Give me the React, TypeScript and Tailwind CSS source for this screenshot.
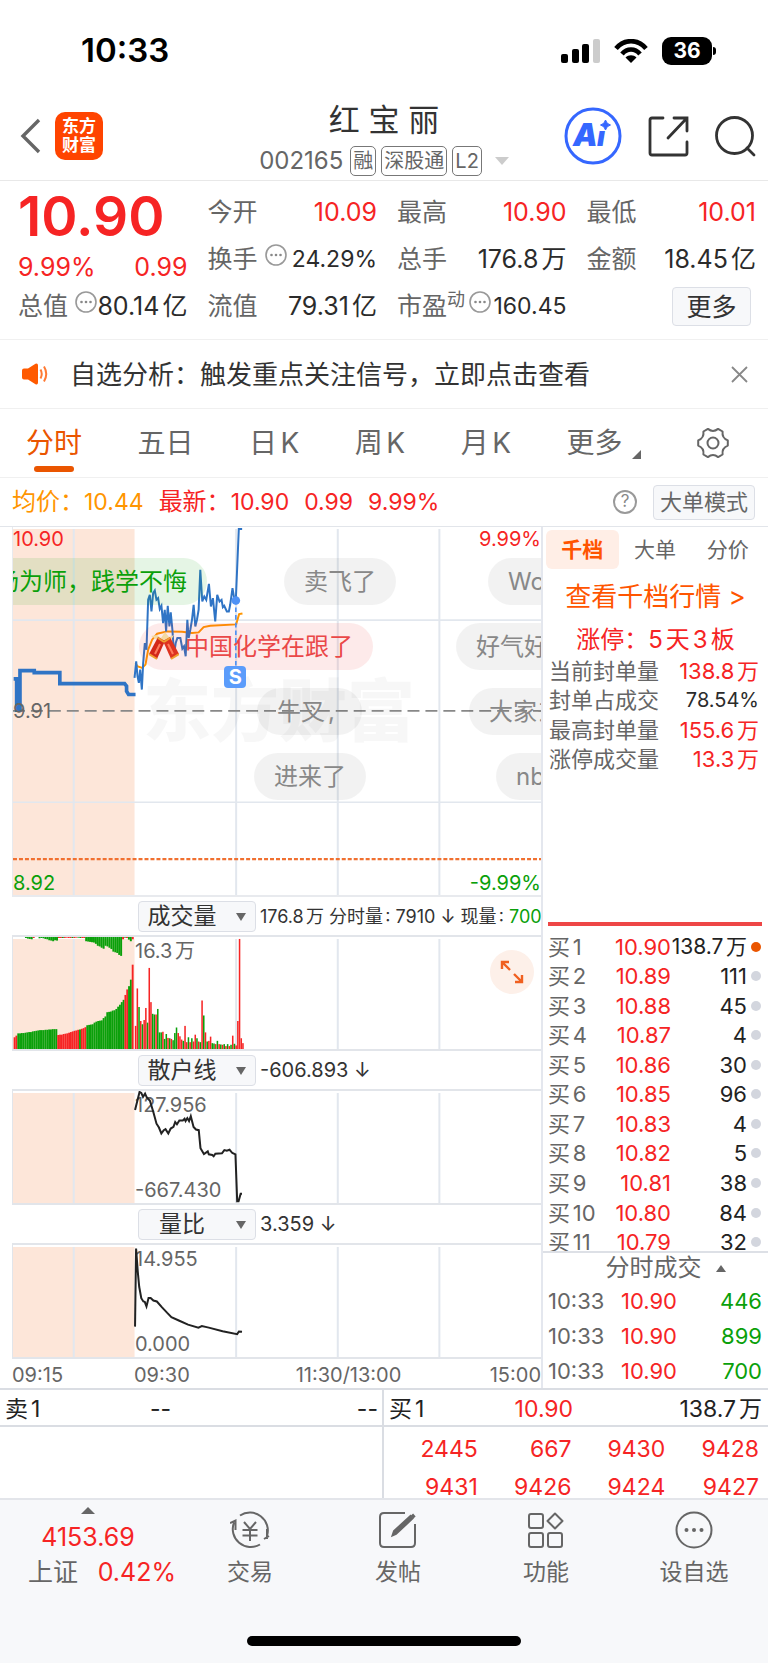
import React from "react";
import clsx from "clsx";

type Tone = "red" | "green" | "dark";

const toneClass: Record<Tone, string> = {
  red: "text-[#f62424]",
  green: "text-[#0aa00a]",
  dark: "text-[#2b2b2b]",
};

const sealStats: { label: string; value: string; tone: Tone }[] = [
  { label: "当前封单量", value: "138.8万", tone: "red" },
  { label: "封单占成交", value: "78.54%", tone: "dark" },
  { label: "最高封单量", value: "155.6万", tone: "red" },
  { label: "涨停成交量", value: "13.3万", tone: "red" },
];

const buyOrders = [
  { level: "买1", price: "10.90", amount: "138.7万", hot: true },
  { level: "买2", price: "10.89", amount: "111" },
  { level: "买3", price: "10.88", amount: "45" },
  { level: "买4", price: "10.87", amount: "4" },
  { level: "买5", price: "10.86", amount: "30" },
  { level: "买6", price: "10.85", amount: "96" },
  { level: "买7", price: "10.83", amount: "4" },
  { level: "买8", price: "10.82", amount: "5" },
  { level: "买9", price: "10.81", amount: "38" },
  { level: "买10", price: "10.80", amount: "84" },
  { level: "买11", price: "10.79", amount: "32" },
];

const trades = [
  { time: "10:33", price: "10.90", amount: "446" },
  { time: "10:33", price: "10.90", amount: "899" },
  { time: "10:33", price: "10.90", amount: "700" },
];

const queue = ["2445", "667", "9430", "9428", "9431", "9426", "9424", "9427"];

const priceLine =
  "402,475 407,425 411,470 415,490 419,450 424,510 428,430 433,370 438,390 443,240 448,225 453,275 458,220 463,212 468,240 473,235 478,268 483,258 488,310 493,270 497,335 502,258 507,320 511,278 516,330 521,405 526,370 531,355 540,355 546,387 551,380 556,410 561,300 565,355 570,330 575,300 580,255 585,320 590,300 595,270 600,150 606,245 612,230 618,240 626,192 632,260 638,235 645,305 651,225 658,245 664,240 668,262 672,258 680,275 686,275 690,255 697,205 702,235 707,240 716,27 726,27";
const auctionLine =
  "38,478 47,478 47,572 57,572 57,453 100,453 100,459 177,459 177,492 372,492 378,500 378,515 384,525 405,525";
const averageLine =
  "405,430 410,440 425,445 435,435 443,390 455,360 470,342 500,335 545,336 575,340 595,338 610,322 630,318 708,314 717,283 727,281";
const retailLine =
  "387,88 400,33 405,36 410,48 416,38 421,50 430,60 440,95 449,130 456,142 463,160 470,150 475,147 483,160 490,145 498,140 503,125 508,132 515,120 525,120 530,115 533,122 538,113 543,122 548,107 556,140 563,148 571,150 576,205 586,223 597,215 600,224 610,226 614,230 619,222 638,221 645,211 652,213 660,210 668,220 677,224 682,368 686,368 692,345 696,345";
const ratioLine =
  "387,742 390,503 395,575 399,620 405,655 411,665 415,666 420,680 426,654 432,654 440,662 450,665 465,683 480,700 492,713 515,724 540,736 570,745 580,740 600,745 640,756 682,765 687,757 696,758";

// one bar per minute: top edge and direction
const minuteBars =
  "320r 205r 262g 305r 315g 302r 265r 310g 142r 247r 283g 285g 285r 268g 340g 340g 338r 360g 345g 357r 358g 360r 364g 342g 325g 342r 352r 362r 366g 320r 370r 355g 370r 358g 368r 347r 358g 368r 370g 242r 288g 340r 368g 366r 353r 373g 374g 376r 366g 376r 377g 378r 376g 382r 376g 382r 378g 350r 375g 380r 305r 53r 358r 373r"
    .split(" ")
    .map((b) => ({ top: parseInt(b), up: b.endsWith("r") }));

// call auction bars, 5.5 units wide
const auctionBars =
  "355r 350r 343g 343g 342g 342g 341g 340g 339g 339g 337g 336g 335g 334g 333g 333g 333g 332g 332g 331g 331g 330g 330g 330g 348r 347r 347r 345r 344r 343r 341r 339r 337r 335r 334r 332r 331g 329r 327r 324r 318g 317g 316g 315g 310g 307g 305g 304g 303g 296g 291g 278g 277g 276g 273g 272g 268g 261g 255g 247g 240g 225r 208r 198g 178g 132r"
    .split(" ")
    .map((b) => ({ top: parseInt(b), up: b.endsWith("r") }));

const unmatchedBars =
  "50g 52g 53g 54g 50r 0g 0g 51g 50g 51g 53g 54g 57g 58g 60g 57g 58g 50r 50r 50g 50r 49r 50r 50r 50g 50r 49r 49g 50g 50r 50r 60g 61g 62g 63g 64g 68g 74g 76g 80g 83g 74g 76g 80g 84g 92g 94g 96g 102g 105g 54r 49g 50r 55g 60g 54r"
    .split(" ")
    .map((b) => ({ top: parseInt(b), up: b.endsWith("r") }));

function StatusBar() {
  return (
    <div className="flex h-[92px] items-center justify-between pt-[10px] pr-[52px] pl-[81px]">
      <span className="text-[33px] font-semibold text-black">10:33</span>
      <div className="flex items-center gap-[14px]">
        <svg width="39" height="24" viewBox="0 0 39 24">
          <rect x="0" y="15" width="7" height="9" rx="2" />
          <rect x="11" y="10" width="7" height="14" rx="2" />
          <rect x="21" y="5" width="7" height="19" rx="2" />
          <rect x="32" y="0" width="7" height="24" rx="2" fill="#cccccc" />
        </svg>
        <svg width="34" height="24" viewBox="0 0 34 24" fill="none" stroke="#000" strokeWidth="4.6">
          <path d="M2 9.5C10-.3 24-.3 32 9.5" />
          <path d="M8 15C13 9 21 9 26 15" />
          <path d="M17 24 11.5 18.5C14.5 15.6 19.5 15.6 22.5 18.5Z" fill="#000" stroke="none" />
        </svg>
        <div className="flex items-center gap-px">
          <div className="flex h-7 w-[50px] items-center justify-center rounded-[9px] bg-black text-[21px] font-bold text-white">
            36
          </div>
          <div className="h-2 w-[3px] rounded-r-full bg-black" />
        </div>
      </div>
    </div>
  );
}

function Header() {
  return (
    <header className="flex h-[89px] items-center border-b border-[#e8e8e8] px-[12px]">
      <div className="flex flex-1 items-center gap-[14px]">
        <button aria-label="返回" className="ml-[8px]">
          <svg width="21" height="36" viewBox="0 0 21 36" fill="none" stroke="#666" strokeWidth="3.4">
            <path d="M19 2 3 18 19 34" />
          </svg>
        </button>
        <div className="flex h-[48px] w-[48px] flex-col items-center justify-center rounded-[10px] bg-[#ff4400] text-[17px] leading-[19px] font-bold text-white">
          <span>东方</span>
          <span>财富</span>
        </div>
      </div>
      <div className="flex flex-col items-center pt-[3px]">
        <h1 className="text-[31px] leading-[46px] text-[#333]">红 宝 丽</h1>
        <div className="flex h-[36px] items-center gap-[5px] text-[20px] text-[#666]">
          <span className="mr-[2px] text-[24px]">002165</span>
          <span className="rounded-[5px] border border-[#777] px-[2px] leading-[28px]">融</span>
          <span className="rounded-[5px] border border-[#777] px-[2px] leading-[28px]">深股通</span>
          <span className="rounded-[5px] border border-[#777] px-[2px] leading-[28px]">L2</span>
          <svg className="ml-[8px]" width="14" height="8" viewBox="0 0 14 8">
            <path d="M0 0h14L7 8z" fill="#ccc" />
          </svg>
        </div>
      </div>
      <div className="flex flex-1 items-center justify-end gap-[26px]">
        <button aria-label="Ai">
          <svg width="58" height="58" viewBox="0 0 58 58" fill="#3567ff">
            <circle cx="29" cy="29" r="27" fill="none" stroke="#3567ff" strokeWidth="3" />
            <text x="9" y="39" fontSize="31" fontWeight="900" fontStyle="italic">A</text>
            <text x="33" y="39" fontSize="27" fontWeight="900" fontStyle="italic">ı</text>
            <path d="M41.5 13Q42.5 17 46.5 18Q42.5 19 41.5 23Q40.5 19 36.5 18Q40.5 17 41.5 13Z" stroke="#3567ff" />
          </svg>
        </button>
        <button aria-label="分享">
          <svg width="41" height="41" viewBox="0 0 41 41" fill="none" stroke="#333" strokeWidth="2.8" strokeLinecap="round">
            <path d="M15 2H4Q2 2 2 4V37Q2 39 4 39H37Q39 39 39 37V26" />
            <path d="M26 2H39V15M38 3 20 22" />
          </svg>
        </button>
        <button aria-label="搜索">
          <svg width="41" height="41" viewBox="0 0 41 41" fill="none" stroke="#333" strokeWidth="2.8" strokeLinecap="round">
            <circle cx="19.5" cy="19.5" r="18" />
            <path d="M32 32 39 39" />
          </svg>
        </button>
      </div>
    </header>
  );
}

function Dots() {
  return (
    <svg className="mb-[10px] shrink-0" width="22" height="22" viewBox="0 0 22 22">
      <circle cx="11" cy="11" r="10" fill="none" stroke="#999" strokeWidth="1.6" />
      <circle cx="6.5" cy="11" r="1.3" fill="#888" />
      <circle cx="11" cy="11" r="1.3" fill="#888" />
      <circle cx="15.5" cy="11" r="1.3" fill="#888" />
    </svg>
  );
}

interface QuoteProps {
  label: string;
  value: string;
  tone?: Tone;
  mark?: string;
  dots?: boolean;
  small?: boolean;
}

function Quote({ label, value, tone = "dark", mark, dots, small }: QuoteProps) {
  return (
    <div className="flex h-[47px] items-center justify-between whitespace-nowrap">
      <span className="flex items-center text-[25px] text-[#666]">
        {label}
        {mark && <span className="mb-[14px] text-[18px]">{mark}</span>}
        {dots && (
          <span className={clsx("flex", mark ? "ml-[4px]" : "ml-[7px]")}>
            <Dots />
          </span>
        )}
      </span>
      <span className={clsx(small ? "text-[23px]" : "text-[25px]", dots && "-ml-2", toneClass[tone])}>{value}</span>
    </div>
  );
}

function QuotePanel() {
  return (
    <section className="grid grid-cols-4 gap-x-5 border-b border-[#f0f0f0] pt-2 pr-[12px] pb-[9px] pl-[18px]">
      <div>
        <div className="flex h-[54px] items-center text-[55px] font-semibold text-[#f62424]">10.90</div>
        <div className="flex h-10 items-end justify-between text-[25px] leading-8 text-[#f62424]">
          <span>9.99%</span>
          <span>0.99</span>
        </div>
        <Quote label="总值" value="80.14亿" dots />
      </div>
      <div>
        <Quote label="今开" value="10.09" tone="red" />
        <Quote label="换手" value="24.29%" dots small />
        <Quote label="流值" value="79.31亿" />
      </div>
      <div>
        <Quote label="最高" value="10.90" tone="red" />
        <Quote label="总手" value="176.8万" />
        <Quote label="市盈" value="160.45" mark="动" dots small />
      </div>
      <div>
        <Quote label="最低" value="10.01" tone="red" />
        <Quote label="金额" value="18.45亿" />
        <div className="flex h-[47px] items-center justify-end pr-[5px]">
          <button className="h-[39px] w-[79px] rounded border border-[#dcdfe6] bg-[#f7f8fa] text-[25px] leading-[36px] text-[#333]">
            更多
          </button>
        </div>
      </div>
    </section>
  );
}

function Notice() {
  return (
    <div className="flex h-[69px] items-center border-b border-[#f0f0f0] pr-[20px] pl-[22px]">
      <svg width="26" height="22" viewBox="0 0 26 22">
        <path d="M0 7.5Q0 5.5 2 5.5H6L13.5.8Q16 0 16 2.5V19.5Q16 22 13.5 21.2L6 16.5H2Q0 16.5 0 14.5Z" fill="#ff5a00" />
        <path d="M18.5 6.5Q21 11 18.5 15.5M22 3.5Q26.5 11 22 18.5" fill="none" stroke="#ff7a33" strokeWidth="2" />
      </svg>
      <a href="#analysis" className="ml-[22px] flex-1 text-[26px] text-[#333]">
        自选分析：触发重点关注信号，立即点击查看
      </a>
      <button aria-label="关闭">
        <svg width="17" height="17" viewBox="0 0 17 17" stroke="#888" strokeWidth="1.8">
          <path d="M1 1 16 16M16 1 1 16" />
        </svg>
      </button>
    </div>
  );
}

function PeriodTabs() {
  return (
    <nav className="flex h-[69px] items-center justify-between border-b border-[#f0f0f0] pr-[39px] pl-[26px] text-[28px] text-[#666]">
      <button className="relative text-[#ea5500]">
        分时
        <span className="absolute inset-x-[8px] -bottom-[8px] h-[6px] rounded-full bg-[#ea5500]" />
      </button>
      <button>五日</button>
      <button>日K</button>
      <button>周K</button>
      <button>月K</button>
      <button className="flex items-end gap-[10px]">
        更多
        <svg className="mb-[5px]" width="9" height="9" viewBox="0 0 9 9">
          <path d="M9 0V9H0z" fill="#666" />
        </svg>
      </button>
      <button aria-label="设置">
        <svg width="32" height="32" viewBox="0 0 32 32" fill="none" stroke="#666" strokeWidth="2" strokeLinejoin="round">
          <path d="M30.8 13.4V18.6Q24.7 21 25.6 27.5L21.1 30.1Q16 26 10.9 30.1L6.4 27.5Q7.3 21 1.2 18.6V13.4Q7.3 11 6.4 4.5L10.9 1.9Q16 6 21.1 1.9L25.6 4.5Q24.7 11 30.8 13.4Z" />
          <circle cx="16" cy="16" r="5.5" />
        </svg>
      </button>
    </nav>
  );
}

function PriceSummary() {
  return (
    <div className="flex h-[48px] items-center justify-between pr-[13px] pl-[12px] text-[23px]">
      <div className="flex items-baseline gap-[15px] text-[#f62424]">
        <span className="text-[#ff9500]">
          <span className="text-[24px]">均价：</span>10.44
        </span>
        <span>
          <span className="text-[24px]">最新：</span>10.90
        </span>
        <span>0.99</span>
        <span>9.99%</span>
      </div>
      <div className="flex items-center gap-[16px]">
        <button aria-label="帮助" className="flex h-6 w-6 items-center justify-center rounded-full border-2 border-[#999] text-[17px] text-[#888]">
          ?
        </button>
        <button className="h-[35px] w-[102px] rounded border border-[#dcdfe6] bg-[#f7f8fa] text-[22px] leading-[32px] text-[#666]">
          大单模式
        </button>
      </div>
    </div>
  );
}

function Grid() {
  return (
    <svg className="absolute inset-x-0 top-[2px] h-[calc(100%-2px)] w-full" viewBox="0 0 530 100" preserveAspectRatio="none">
      <rect width="122" height="100" fill="#fde6d9" />
      <path d="M61 0V100M224 0V100M326 0V100M428 0V100" stroke="#e2e7ee" strokeWidth="2" vectorEffect="non-scaling-stroke" />
    </svg>
  );
}

function Firecrackers() {
  return (
    <svg width="30" height="30" viewBox="0 0 30 30">
      <path d="M2 4 8 3 12 6 16 0 20 5 25 3 22 8 14 9 7 7Z" fill="#f5d9a0" />
      <path d="M9 5 16 9 8 27 0 22Z" fill="#d3281a" />
      <path d="M21 5 14 9 22 27 30 22Z" fill="#de3320" />
      <path d="M0 22 8 27M22 27 30 22M9 6 15 10M15 10 21 6" stroke="#f0a030" strokeWidth="2" />
      <path d="M11 12 6 22M19 12 24 22" stroke="#ff7a5c" strokeWidth="2" />
    </svg>
  );
}

const pill = "absolute flex h-[47px] items-center rounded-full px-5 text-[24px] whitespace-pre";
const grayPill = "bg-black/5 text-[#888]";

function PriceChart() {
  return (
    <div className="relative h-[370px] overflow-hidden border-b-2 border-l border-[#e8eaee]">
      <Grid />
      <div className="absolute top-[146px] left-[130px] text-[68px] leading-[76px] font-black text-black/3">东方财富</div>
      <svg className="absolute inset-0 h-full w-full" viewBox="36 21 1590 1107" preserveAspectRatio="none" fill="none">
        <path d="M36 301H1626M36 849H1626" stroke="#e2e7ee" strokeWidth="5" />
        <path d="M36 574H1626" stroke="#888" strokeWidth="5" strokeDasharray="36 18" />
        <path d="M36 1020H1626" stroke="#f07030" strokeWidth="7" strokeDasharray="12 6" />
        <polyline points={averageLine} stroke="#ff9500" strokeWidth="6" />
        <polyline points={auctionLine} stroke="#2f74c5" strokeWidth="11" />
        <polyline points={priceLine} stroke="#2f74c5" strokeWidth="6" />
      </svg>
      <div className={clsx(pill, "top-[31px] left-[-38px] bg-[#00a000]/10 text-[#0aa00a]")}>场为师，践学不悔</div>
      <div className={clsx(pill, grayPill, "top-[31px] left-[271px]")}>卖飞了</div>
      <div className={clsx(pill, grayPill, "top-[31px] left-[475px]")}>Wc</div>
      <div className={clsx(pill, "top-[96px] left-[126px] bg-[#f03030]/10 pl-[10px] text-[#ea4848]")}>
        <Firecrackers />
        <span className="ml-[6px]">中国化学在跟了</span>
      </div>
      <div className={clsx(pill, grayPill, "top-[96px] left-[443px]")}>好气好</div>
      <div className={clsx(pill, grayPill, "top-[161px] left-[244px]")}>牛叉, </div>
      <div className={clsx(pill, grayPill, "top-[161px] left-[456px]")}>大家去</div>
      <div className={clsx(pill, grayPill, "top-[226px] left-[241px]")}>进来了</div>
      <div className={clsx(pill, grayPill, "top-[226px] left-[483px]")}>nb</div>
      <svg className="absolute inset-0 h-full w-full" viewBox="36 21 1590 1107" preserveAspectRatio="none">
        <path d="M707 240V440" stroke="#4f92f5" strokeWidth="5" strokeDasharray="14 9" />
        <circle cx="707" cy="242" r="13" fill="#4f92f5" />
      </svg>
      <div className="absolute top-[139px] left-[40%] flex h-[22px] w-[22px] items-center justify-center rounded bg-[#5b9cfb] text-[20px] font-bold text-white">
        S
      </div>
      <span className="absolute top-0 left-0 text-[20px] leading-6 text-[#f62424]">10.90</span>
      <span className="absolute top-0 right-0 text-[20px] leading-6 text-[#f62424]">9.99%</span>
      <span className="absolute top-[172px] left-0 text-[20px] leading-6 text-[#666]">9.91</span>
      <span className="absolute bottom-0 left-0 text-[20px] leading-6 text-[#0aa00a]">8.92</span>
      <span className="absolute right-0 bottom-0 text-[20px] leading-6 text-[#0aa00a]">-9.99%</span>
    </div>
  );
}

const indicators = ["成交量", "散户线", "量比"];

function IndicatorHead({ name, children }: { name: string; children: React.ReactNode }) {
  return (
    <div className="flex h-[38px] items-center gap-[4px] pl-[126px] whitespace-nowrap text-[#333]">
      <div className="relative shrink-0">
        <select
          aria-label="指标"
          defaultValue={name}
          className="block h-[31px] w-[118px] appearance-none rounded border border-[#dcdfe6] bg-[#f7f8fa] pr-[30px] text-[23px] leading-[27px] [text-align-last:center]"
        >
          {indicators.map((o) => (
            <option key={o}>{o}</option>
          ))}
        </select>
        <svg className="pointer-events-none absolute top-[12px] right-[10px]" width="10" height="8" viewBox="0 0 10 8">
          <path d="M0 0H10L5 8z" fill="#666" />
        </svg>
      </div>
      {children}
    </div>
  );
}

function VolumeChart() {
  return (
    <div className="relative h-[116px] border-y-2 border-l border-[#e2e5ea]">
      <Grid />
      <svg className="absolute inset-0 h-full w-full" viewBox="36 47 1590 344" preserveAspectRatio="none">
        {auctionBars.map((b, i) => (
          <rect key={i} x={38 + i * 5.47} y={b.top} width={5.6} height={391 - b.top} fill={b.up ? "#f62424" : "#0aa00a"} />
        ))}
        {unmatchedBars.map((b, i) => (
          <rect key={i} x={72 + i * 5.85} y={47} width={5.9} height={Math.max(0, b.top - 47)} fill={b.up ? "#f62424" : "#0aa00a"} />
        ))}
        {minuteBars.map((b, i) => (
          <rect key={i} x={403 + i * 5.13} y={b.top} width={4.6} height={391 - b.top} fill={b.up ? "#f62424" : "#0aa00a"} />
        ))}
      </svg>
      <span className="absolute top-[2px] left-[122px] text-[20px] leading-6 text-[#666]">16.3万</span>
      <button aria-label="全屏" className="absolute top-[13px] right-[7px] flex h-[44px] w-[44px] items-center justify-center rounded-full bg-[#fdf0e9]">
        <svg width="24" height="24" viewBox="0 0 24 24" fill="none" stroke="#f06020" strokeWidth="2.4">
          <path d="M2 9V2H9M2 2 10 10M22 15V22H15M22 22 14 14" />
        </svg>
      </button>
    </div>
  );
}

function LineChart({ points, viewBox, high, low }: { points: string; viewBox: string; high: string; low: string }) {
  return (
    <div className="relative h-[116px] border-y-2 border-l border-[#e2e5ea]">
      <Grid />
      <span className="absolute top-[2px] left-[122px] text-[20px] leading-6 text-[#666]">{high}</span>
      <span className="absolute bottom-[1px] left-[122px] text-[20px] leading-6 text-[#666]">{low}</span>
      <svg className="absolute inset-0 h-full w-full" viewBox={viewBox} preserveAspectRatio="none" fill="none">
        <polyline points={points} stroke="#222" strokeWidth="2" vectorEffect="non-scaling-stroke" />
      </svg>
    </div>
  );
}

function Charts() {
  return (
    <div className="min-w-0 flex-1 pl-[12px]">
      <PriceChart />
      <IndicatorHead name="成交量">
        <span className="text-[18px]">
          176.8万 分时量: 7910 ↓ 现量: <span className="text-[#0aa00a]">700</span>
        </span>
      </IndicatorHead>
      <VolumeChart />
      <IndicatorHead name="散户线">
        <span className="text-[20px]">-606.893 ↓</span>
      </IndicatorHead>
      <LineChart points={retailLine} viewBox="34.5 30 1525 343" high="127.956" low="-667.430" />
      <IndicatorHead name="量比">
        <span className="text-[20px]">3.359 ↓</span>
      </IndicatorHead>
      <LineChart points={ratioLine} viewBox="34.5 492 1525 343" high="14.955" low="0.000" />
      <div className="grid h-[29px] grid-cols-[122px_1fr_1fr_1fr] items-center pt-px text-[20px] text-[#666]">
        <span>09:15</span>
        <span>09:30</span>
        <span className="pl-[22px] text-center">11:30/13:00</span>
        <span className="text-right">15:00</span>
      </div>
    </div>
  );
}

function OrderBook() {
  return (
    <aside className="flex w-[227px] shrink-0 flex-col border-l-2 border-[#e4e7ee] text-[22px]">
      <div className="flex h-[42px] items-center pt-[3px] pr-[4px] pl-[3px] text-[21px] text-[#666]">
        <button className="h-[39px] flex-1 rounded-md bg-[#ffeee6] font-bold text-[#ff5500]">千档</button>
        <button className="flex-1">大单</button>
        <button className="flex-1">分价</button>
      </div>
      <a href="#depth" className="flex h-[54px] items-center justify-center text-[26px] text-[#ff5500]">
        查看千档行情 &gt;
      </a>
      <div className="flex h-[33px] items-center justify-center text-[24px] text-[#f62424]">涨停：5天3板</div>
      <table className="h-[118px] w-full">
        <tbody>
          {sealStats.map((s) => (
            <tr key={s.label} className="leading-6 whitespace-nowrap">
              <th scope="row" className="p-0 pl-[6px] text-left font-normal text-[#666]">
                {s.label}
              </th>
              <td className={clsx("p-0 pr-[9px] text-right", toneClass[s.tone], s.tone === "dark" && "text-[20px]")}>{s.value}</td>
            </tr>
          ))}
        </tbody>
      </table>
      <div className="mt-auto mr-[6px] ml-[5px] h-[4px] bg-[#ee4646]" />
      <div className="mt-[6px] h-[321px] overflow-hidden border-b-2 border-[#dde0e6]">
        <table className="h-[325px] w-full table-fixed">
          <tbody>
            {buyOrders.map((o) => (
              <tr key={o.level} className="leading-6 whitespace-nowrap">
                <th scope="row" className="w-[60px] p-0 pl-[5px] text-left font-normal text-[#666]">
                  {o.level}
                </th>
                <td className="w-[68px] p-0 text-right text-[#f62424]">{o.price}</td>
                <td className={clsx("p-0 text-right text-[#222]", o.hot && "text-[21px]")}>{o.amount}</td>
                <td className="w-[21px] p-0 pl-[4px]">
                  <div className={clsx("h-[10px] w-[10px] rounded-full", o.hot ? "bg-[#ea5500]" : "bg-[#d3d6de]")} />
                </td>
              </tr>
            ))}
          </tbody>
        </table>
      </div>
      <button className="flex h-[30px] items-center justify-center gap-[14px] pl-[20px] text-[24px] text-[#666]">
        分时成交
        <svg width="10" height="7" viewBox="0 0 10 7">
          <path d="M5 0 10 7H0z" fill="#666" />
        </svg>
      </button>
      <table className="h-[105px] w-full">
        <tbody>
          {trades.map((t, i) => (
            <tr key={i} className="leading-6">
              <td className="p-0 pl-[5px] text-[#666]">{t.time}</td>
              <td className="w-[70px] p-0 text-right text-[#f62424]">{t.price}</td>
              <td className="w-[91px] p-0 pr-[6px] text-right text-[#0aa00a]">{t.amount}</td>
            </tr>
          ))}
        </tbody>
      </table>
    </aside>
  );
}

function BestQuotes() {
  return (
    <section className="grid grid-cols-2 border-t-2 border-[#dadde3] text-[23px] text-[#222]">
      <div className="flex h-[37px] items-center justify-between border-r-2 border-b-2 border-[#dadde3] pt-[4px] pr-[4px] pl-[5px]">
        <span>卖1</span>
        <span className="mr-[76px]">--</span>
        <span>--</span>
      </div>
      <div className="flex h-[37px] items-center justify-between border-b-2 border-[#dadde3] pt-[4px] pr-[6px] pl-[5px]">
        <span>买1</span>
        <span className="mr-[16px] text-[#f62424]">10.90</span>
        <span>138.7万</span>
      </div>
      <div className="border-r-2 border-[#dadde3]" />
      <div className="grid h-[71px] grid-cols-4 overflow-hidden pt-[3px] pr-[9px] text-right text-[23px] leading-[38px] text-[#f62424]">
        {queue.map((q) => (
          <span key={q}>{q}</span>
        ))}
      </div>
    </section>
  );
}

function NavItem({ label, children }: { label: string; children: React.ReactNode }) {
  return (
    <button className="flex flex-1 flex-col items-center">
      <svg className="mt-[11px]" width="40" height="38" viewBox="0 0 40 38" fill="none" stroke="#666" strokeWidth="2">
        {children}
      </svg>
      <span className="mt-[6px] text-[23px] leading-[34px] text-[#666]">{label}</span>
    </button>
  );
}

function BottomBar() {
  return (
    <footer className="h-[166px] border-t-2 border-[#e3e5ea] bg-[#f7f8fa]">
      <div className="flex">
        <button className="flex w-[176px] shrink-0 flex-col items-center text-[25px] text-[#f62424]">
          <svg className="mt-[7px]" width="14" height="7" viewBox="0 0 14 7">
            <path d="M7 0 14 7H0z" fill="#666" />
          </svg>
          <span className="mt-[6px] leading-[34px]">4153.69</span>
          <span className="mt-px flex w-full justify-between pl-[28px] leading-[34px]">
            <span className="text-[#666]">上证</span>
            <span>0.42%</span>
          </span>
        </button>
        <div className="flex flex-1">
          <NavItem label="交易">
            <path d="M10 4.5A18 18 0 0 1 37 25M34 28 39 25M30 33.5A18 18 0 0 1 4 11.5M0 12 5.5 9.5V19M37 28V18" />
            <path d="M14 11 20 18 26 11M12.5 19H27.5M12.5 24.5H27.5M20 18V30" />
          </NavItem>
          <NavItem label="发帖">
            <path d="M27 2H6Q2 2 2 6V32Q2 36 6 36H33Q37 36 37 32V13" />
            <path d="M14.5 24.5 16 20 32.5 5 34.5 7.5 18 23Z" fill="#666" />
            <path d="M34 3.5 36.5 6.5" strokeWidth="3" />
          </NavItem>
          <NavItem label="功能">
            <rect x="3" y="3" width="14" height="14" rx="2" />
            <rect x="3" y="22" width="14" height="14" rx="2" />
            <rect x="22" y="22" width="14" height="14" rx="2" />
            <path d="M29 2.5 36.5 10 29 17.5 21.5 10Z" strokeLinejoin="round" />
          </NavItem>
          <NavItem label="设自选">
            <circle cx="20" cy="19" r="17.5" />
            <g fill="#666" stroke="none">
              <circle cx="12.5" cy="19" r="2" />
              <circle cx="20" cy="19" r="2" />
              <circle cx="27.5" cy="19" r="2" />
            </g>
          </NavItem>
        </div>
      </div>
      <div className="mx-auto mt-[47px] h-[10px] w-[274px] rounded-full bg-black" />
    </footer>
  );
}

export default function App() {
  return (
    <div className="w-full bg-white font-[Inter,'Noto_Sans_CJK_SC',sans-serif] [text-autospace:normal]" lang="zh-CN">
      <StatusBar />
      <Header />
      <QuotePanel />
      <Notice />
      <PeriodTabs />
      <PriceSummary />
      <main className="flex border-t border-[#e2e5ea]">
        <Charts />
        <OrderBook />
      </main>
      <BestQuotes />
      <BottomBar />
    </div>
  );
}
